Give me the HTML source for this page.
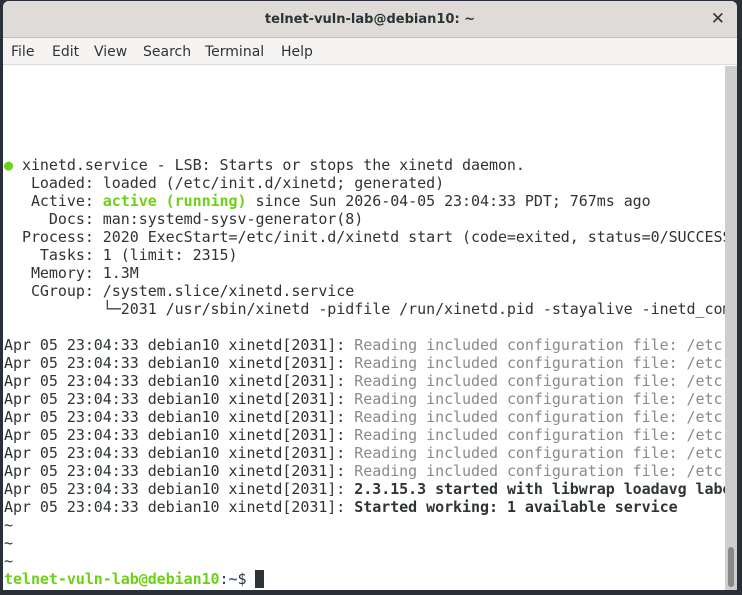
<!DOCTYPE html>
<html><head><style>
body{margin:0;width:742px;height:595px;background:#2a3039;overflow:hidden;position:relative;font-family:"DejaVu Sans","Liberation Sans",sans-serif}
.win{position:absolute;left:3px;top:1px;width:734px;height:589px;background:#fff;border-radius:6px 6px 0 0;overflow:hidden}
.title{height:36px;background:#dedbd8;border-bottom:1px solid #c0bdb9;text-align:center;font-weight:bold;font-size:13px;line-height:38px;color:#2e3436}
.x{position:absolute;right:12px;top:8px;font-size:17px;font-weight:bold;color:#333}
.menu{height:26px;background:#f5f4f2;border-bottom:1px solid #dcdad7;font-size:14px;line-height:29px;color:#2e3436;position:relative}
.menu span{position:absolute;top:0}
.term{position:absolute;left:1px;top:65px;width:722px;font-family:"DejaVu Sans Mono",monospace;font-size:15px;letter-spacing:-0.05px;line-height:18px;color:#2e3436;white-space:pre;overflow:hidden}
.gb{color:#6dd116;font-weight:bold}.gr{color:#8a8a8a}.b{font-weight:bold}
.sb{position:absolute;left:722px;top:65px;width:12px;height:524px;background:#cecece}
.th{position:absolute;left:725px;top:546px;width:6px;height:40px;background:#888;border-radius:3px}
</style></head><body>
<div class="win">
<div class="title">telnet-vuln-lab@debian10: ~</div><div class="x">✕</div>
<div class="menu"><span style="left:8px">File</span><span style="left:49px">Edit</span><span style="left:91px">View</span><span style="left:140px">Search</span><span style="left:202px">Terminal</span><span style="left:278px">Help</span></div>
<div class="term">




<span class="gb">●</span> xinetd.service - LSB: Starts or stops the xinetd daemon.
   Loaded: loaded (/etc/init.d/xinetd; generated)
   Active: <span class="gb">active (running)</span> since Sun 2026-04-05 23:04:33 PDT; 767ms ago
     Docs: man:systemd-sysv-generator(8)
  Process: 2020 ExecStart=/etc/init.d/xinetd start (code=exited, status=0/SUCCESS)
    Tasks: 1 (limit: 2315)
   Memory: 1.3M
   CGroup: /system.slice/xinetd.service
           └─2031 /usr/sbin/xinetd -pidfile /run/xinetd.pid -stayalive -inetd_compat

Apr 05 23:04:33 debian10 xinetd[2031]: <span class="gr">Reading included configuration file: /etc</span>
Apr 05 23:04:33 debian10 xinetd[2031]: <span class="gr">Reading included configuration file: /etc</span>
Apr 05 23:04:33 debian10 xinetd[2031]: <span class="gr">Reading included configuration file: /etc</span>
Apr 05 23:04:33 debian10 xinetd[2031]: <span class="gr">Reading included configuration file: /etc</span>
Apr 05 23:04:33 debian10 xinetd[2031]: <span class="gr">Reading included configuration file: /etc</span>
Apr 05 23:04:33 debian10 xinetd[2031]: <span class="gr">Reading included configuration file: /etc</span>
Apr 05 23:04:33 debian10 xinetd[2031]: <span class="gr">Reading included configuration file: /etc</span>
Apr 05 23:04:33 debian10 xinetd[2031]: <span class="gr">Reading included configuration file: /etc</span>
Apr 05 23:04:33 debian10 xinetd[2031]: <span class="b">2.3.15.3 started with libwrap loadavg labeled</span>
Apr 05 23:04:33 debian10 xinetd[2031]: <span class="b">Started working: 1 available service</span>
~
~
~
<span class="gb">telnet-vuln-lab@debian10</span>:<span class="b" style="color:#3465a4">~</span>$ <span style="background:#2e3436"> </span></div>
<div class="sb"></div><div class="th"></div>
</div>
</body></html>
